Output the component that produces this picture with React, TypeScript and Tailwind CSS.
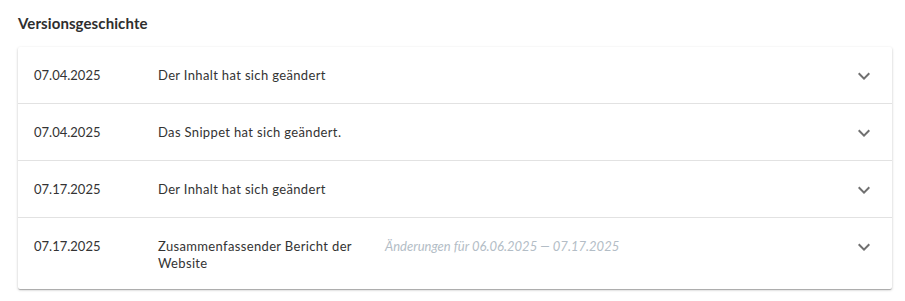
const rows = [
  { date: '07.04.2025', text: 'Der Inhalt hat sich geändert' },
  { date: '07.04.2025', text: 'Das Snippet hat sich geändert.' },
  { date: '07.17.2025', text: 'Der Inhalt hat sich geändert' },
  {
    date: '07.17.2025',
    text: 'Zusammenfassender Bericht der Website',
    note: 'Änderungen für 06.06.2025 — 07.17.2025',
  },
];

function ExpandIcon() {
  return (
    <svg width="24" height="24" viewBox="0 0 24 24" className="fill-[#707070]">
      <path d="M16.59 8.59 12 13.17 7.41 8.59 6 10l6 6 6-6z" />
    </svg>
  );
}

export default function App() {
  return (
    <div className="bg-white min-h-screen pl-[18px] pr-[13px] pt-[13px] font-['Lato',sans-serif] text-[#333]">
      <h2 className="text-[15px] leading-[20px] font-bold text-[#2e2e2e] mb-[14px] tracking-[0.1px]">Versionsgeschichte</h2>

      <div className="bg-white rounded-[2px] shadow-[0_1px_3px_rgba(0,0,0,0.2),0_1px_1px_rgba(0,0,0,0.14),0_2px_1px_-1px_rgba(0,0,0,0.12)]">
        {rows.map((row, i) => (
          <div
            key={i}
            className={`flex items-start min-h-[57px] pt-[20px] pb-[17px] pl-[16px] pr-[16px] text-[13px] leading-[17px] ${
              i < rows.length - 1 ? 'border-b border-[#e2e2e2]' : ''
            }`}
          >
            <div className="w-[124px] shrink-0">{row.date}</div>
            <div className="w-[211px] shrink-0 mr-[16px] tracking-[0.35px]">{row.text}</div>
            <div className="flex-1 italic text-[#b3bdc6]">{row.note}</div>
            <div className="h-[17px] w-[24px] flex items-center justify-center">
              <ExpandIcon />
            </div>
          </div>
        ))}
      </div>
    </div>
  );
}
